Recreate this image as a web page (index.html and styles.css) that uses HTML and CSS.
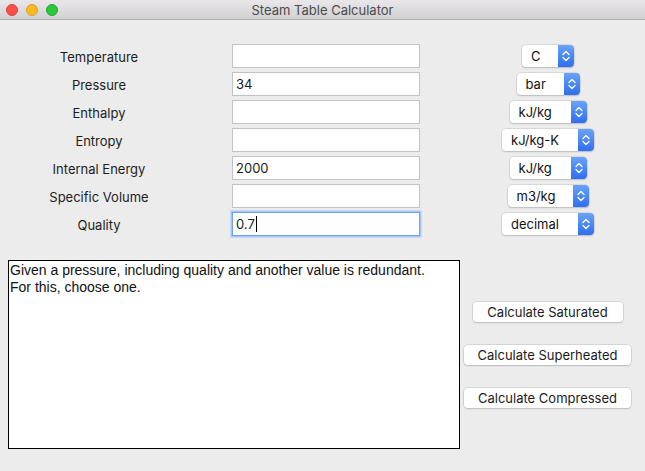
FILE: index.html
```html
<!DOCTYPE html>
<html>
<head>
<meta charset="utf-8">
<link rel="stylesheet" href="styles.css">
</head>
<body>
<div class="window">
  <div class="titlebar">
    <div class="lights">
      <span class="light red"></span>
      <span class="light yellow"></span>
      <span class="light green"></span>
    </div>
    <div class="title">Steam Table Calculator</div>
  </div>
  <div class="content">
    <div class="form">
      <div class="label">Temperature</div>
      <div class="field"></div>
      <div class="popcell"><div class="popup w52"><span class="ptext">C</span><span class="stepper"><svg width="16" height="22" viewBox="0 0 16 22"><path d="M5 9.5 L8 6.5 L11 9.5 M5 12.5 L8 15.5 L11 12.5" fill="none" stroke="#fff" stroke-width="1.3" stroke-linecap="round" stroke-linejoin="round"/></svg></span></div></div>

      <div class="label">Pressure</div>
      <div class="field">34</div>
      <div class="popcell"><div class="popup w63"><span class="ptext">bar</span><span class="stepper"><svg width="16" height="22" viewBox="0 0 16 22"><path d="M5 9.5 L8 6.5 L11 9.5 M5 12.5 L8 15.5 L11 12.5" fill="none" stroke="#fff" stroke-width="1.3" stroke-linecap="round" stroke-linejoin="round"/></svg></span></div></div>

      <div class="label">Enthalpy</div>
      <div class="field"></div>
      <div class="popcell"><div class="popup w77"><span class="ptext">kJ/kg</span><span class="stepper"><svg width="16" height="22" viewBox="0 0 16 22"><path d="M5 9.5 L8 6.5 L11 9.5 M5 12.5 L8 15.5 L11 12.5" fill="none" stroke="#fff" stroke-width="1.3" stroke-linecap="round" stroke-linejoin="round"/></svg></span></div></div>

      <div class="label">Entropy</div>
      <div class="field"></div>
      <div class="popcell"><div class="popup w92"><span class="ptext">kJ/kg-K</span><span class="stepper"><svg width="16" height="22" viewBox="0 0 16 22"><path d="M5 9.5 L8 6.5 L11 9.5 M5 12.5 L8 15.5 L11 12.5" fill="none" stroke="#fff" stroke-width="1.3" stroke-linecap="round" stroke-linejoin="round"/></svg></span></div></div>

      <div class="label">Internal Energy</div>
      <div class="field">2000</div>
      <div class="popcell"><div class="popup w77"><span class="ptext">kJ/kg</span><span class="stepper"><svg width="16" height="22" viewBox="0 0 16 22"><path d="M5 9.5 L8 6.5 L11 9.5 M5 12.5 L8 15.5 L11 12.5" fill="none" stroke="#fff" stroke-width="1.3" stroke-linecap="round" stroke-linejoin="round"/></svg></span></div></div>

      <div class="label">Specific Volume</div>
      <div class="field"></div>
      <div class="popcell"><div class="popup w81"><span class="ptext">m3/kg</span><span class="stepper"><svg width="16" height="22" viewBox="0 0 16 22"><path d="M5 9.5 L8 6.5 L11 9.5 M5 12.5 L8 15.5 L11 12.5" fill="none" stroke="#fff" stroke-width="1.3" stroke-linecap="round" stroke-linejoin="round"/></svg></span></div></div>

      <div class="label">Quality</div>
      <div class="field focused">0.7<span class="caret"></span></div>
      <div class="popcell"><div class="popup w92"><span class="ptext">decimal</span><span class="stepper"><svg width="16" height="22" viewBox="0 0 16 22"><path d="M5 9.5 L8 6.5 L11 9.5 M5 12.5 L8 15.5 L11 12.5" fill="none" stroke="#fff" stroke-width="1.3" stroke-linecap="round" stroke-linejoin="round"/></svg></span></div></div>
    </div>

    <div class="lower">
      <div class="output">Given a pressure, including quality and another value is redundant.<br>For this, choose one.</div>
      <div class="buttons">
        <div class="btn b150">Calculate Saturated</div>
        <div class="btn b167">Calculate Superheated</div>
        <div class="btn b167">Calculate Compressed</div>
      </div>
    </div>
  </div>
</div>
</body>
</html>
```

FILE: styles.css
```css
* { box-sizing: border-box; }
html, body {
  margin: 0;
  padding: 0;
  background: #ececec;
  font-family: Inter, "Liberation Sans", Arial, sans-serif;
  font-size: 13px;
  color: #1b1b1b;
}
.window {
  width: 645px;
  height: 471px;
  background: #ececec;
  overflow: hidden;
}
.titlebar {
  height: 20px;
  background: linear-gradient(#e9e7e9, #d2d0d2);
  border-bottom: 1px solid #b1b1b1;
  display: flex;
  align-items: center;
  position: relative;
}
.lights {
  display: flex;
  gap: 8px;
  padding-left: 6px;
}
.light {
  width: 12px;
  height: 12px;
  border-radius: 50%;
  display: block;
}
.red { background: #fc4f4b; border: 1px solid #e2403c; }
.yellow { background: #fdb826; border: 1px solid #dfa024; }
.green { background: #2ac73c; border: 1px solid #1fad30; }
.title {
  position: absolute;
  left: 0;
  right: 0;
  top: 2px;
  text-align: center;
  font-size: 13px;
  color: #4b4b4b;
}
.content {
  padding-top: 24px;
}
.form {
  display: grid;
  grid-template-columns: 198px 188px 188px;
  grid-auto-rows: 24px;
  column-gap: 34px;
  row-gap: 4px;
}
.label {
  display: flex;
  align-items: center;
  justify-content: center;
  padding-top: 2px;
  color: #1d1d1d;
}
.field {
  background: #fff;
  border: 1px solid #c2c2c2;
  display: flex;
  align-items: center;
  padding-left: 3px;
  color: #1a1a1a;
}
.field.focused {
  border: 1px solid #6fa3ee;
  box-shadow: 0 0 0 1.5px #a6c6f5;
  padding-left: 3px;
}
.caret {
  display: inline-block;
  width: 1px;
  height: 16px;
  background: #000;
  margin-left: 1px;
}
.popcell {
  display: flex;
  align-items: center;
  justify-content: center;
}
.popup {
  height: 22px;
  background: #fff;
  border-radius: 4px;
  box-shadow: 0 0 0 0.5px #c4c4c4, 0 1px 1.5px rgba(0,0,0,0.22);
  display: flex;
  align-items: center;
  overflow: hidden;
}
.ptext {
  flex: 1;
  padding-left: 9px;
  color: #111;
}
.stepper {
  width: 16px;
  height: 22px;
  background: linear-gradient(#6aa3f9, #2f6ef1);
  display: block;
}
.stepper svg { display: block; }
.w52 { width: 52px; }
.w63 { width: 63px; }
.w77 { width: 77px; }
.w81 { width: 81px; }
.w92 { width: 92px; }
.lower {
  display: flex;
  margin-top: 24px;
  padding-left: 8px;
}
.output {
  width: 452px;
  height: 189px;
  background: #fff;
  border: 1px solid #000;
  padding: 1px 0 0 1px;
  font-family: "Liberation Sans", Arial, sans-serif;
  font-size: 14px;
  line-height: 17px;
  color: #111;
}
.buttons {
  width: 175px;
  display: flex;
  flex-direction: column;
  align-items: center;
  padding-top: 42px;
  gap: 23px;
}
.btn {
  height: 20px;
  background: #fff;
  border-radius: 4px;
  box-shadow: 0 0 0 0.5px #c0c0c0, 0 1px 1.5px rgba(0,0,0,0.2);
  display: flex;
  align-items: center;
  justify-content: center;
  color: #1a1a1a;
}
.b150 { width: 150px; }
.b167 { width: 167px; }
```
